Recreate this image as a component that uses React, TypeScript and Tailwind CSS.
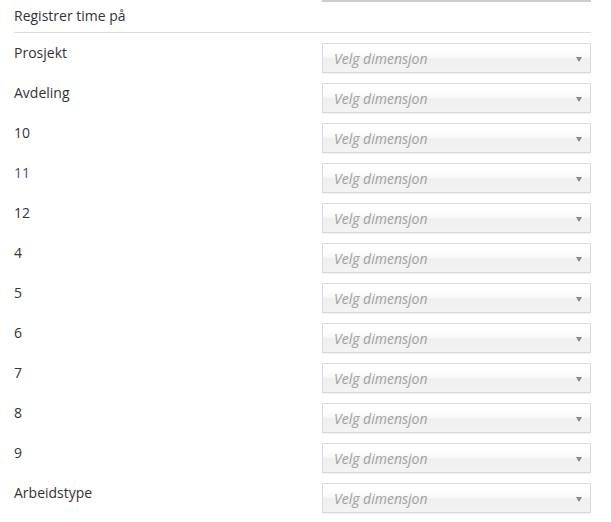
const dimensions = [
  'Prosjekt',
  'Avdeling',
  '10',
  '11',
  '12',
  '4',
  '5',
  '6',
  '7',
  '8',
  '9',
  'Arbeidstype',
]

function DimensionSelect() {
  return (
    <div className="relative mt-[10px] flex h-[30px] w-[269px] items-center border border-[#d9d9d9] bg-[linear-gradient(#ffffff_20%,#f7f7f7_50%,#f0f0f0_52%,#f3f3f3_100%)] pl-[11px] shadow-[0_1px_1px_rgba(0,0,0,0.06)]">
      <span className="text-[14px] italic text-[#a0a0a0]">Velg dimensjon</span>
      {/* chosen-style arrow */}
      <span className="absolute right-[8px] top-[13px] h-0 w-0 border-x-[3px] border-t-[5px] border-x-transparent border-t-[#8a8a8a]" />
    </div>
  )
}

export default function App() {
  return (
    <div className="min-h-screen bg-white font-['Open_Sans',sans-serif] text-[14px] text-[#333333]">
      <div className="pl-[14px] pr-[20px]">
        <div className="ml-[308px] h-[2px] w-[269px] bg-[#cccccc]" />
        <div className="pb-[6px] pt-[4px] leading-[20px]">Registrer time på</div>
        <div className="h-px bg-[#dddddd]" />
        {dimensions.map(name => (
          <div key={name} className="flex h-[40px] justify-between">
            <div
              className={`pt-[10px] leading-[20px] ${name === '11' ? 'text-[#3a5690]' : ''}`}
            >
              {name}
            </div>
            <DimensionSelect />
          </div>
        ))}
      </div>
    </div>
  )
}
